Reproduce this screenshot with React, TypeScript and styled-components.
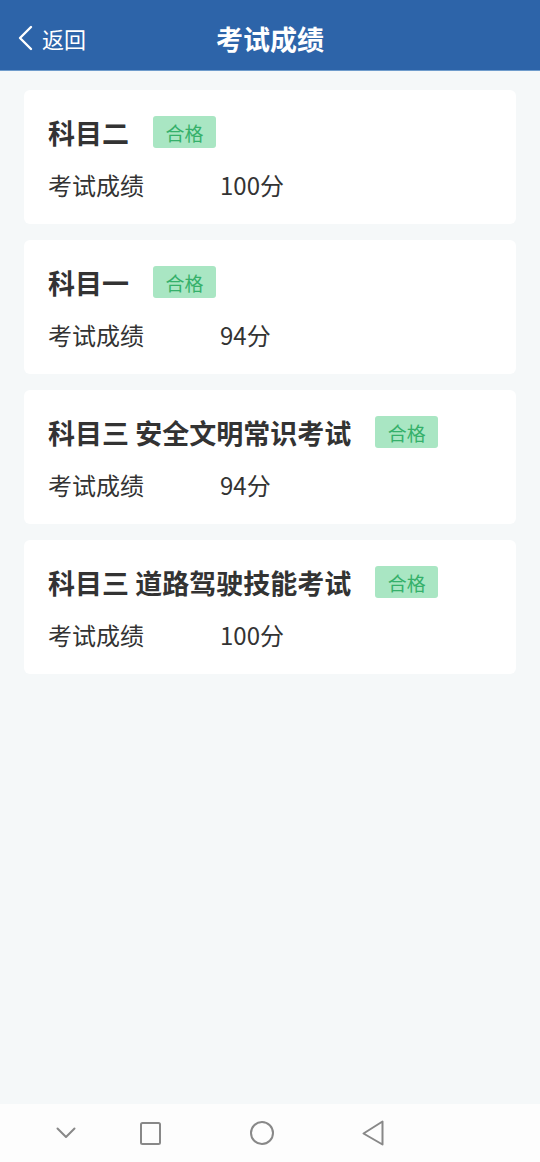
import styled, { createGlobalStyle } from "styled-components";

const GlobalStyle = createGlobalStyle`
  html, body {
    margin: 0;
    padding: 0;
    background: #f5f8f9;
  }
  body {
    font-family: "Noto Sans CJK SC", "Noto Sans", sans-serif;
  }
`;

const Page = styled.div`
  width: 540px;
  height: 1162px;
  display: flex;
  flex-direction: column;
  background: #f5f8f9;
`;

const Header = styled.header`
  height: 71px;
  flex-shrink: 0;
  box-sizing: border-box;
  padding-top: 6px;
  background: #2d64a9;
  border-bottom: 1px solid #6f9ccc;
  display: grid;
  grid-template-columns: 1fr auto 1fr;
  align-items: center;
  color: #fff;
`;

const BackButton = styled.div`
  display: flex;
  align-items: center;
  gap: 8px;
  padding-left: 17px;
  font-size: 22px;
  line-height: 1;
`;

const Title = styled.h1`
  margin: 0;
  font-size: 27px;
  font-weight: 700;
  line-height: 1;
`;

const List = styled.main`
  flex: 1;
  display: flex;
  flex-direction: column;
  gap: 16px;
  padding: 19px 24px 0;
`;

const Card = styled.section`
  height: 134px;
  box-sizing: border-box;
  background: #fff;
  border-radius: 6px;
  padding: 26px 24px 0;
  display: flex;
  flex-direction: column;
  gap: 25px;
`;

const CardHead = styled.div`
  display: flex;
  align-items: center;
  gap: 24px;
  height: 32px;
`;

const Subject = styled.div`
  font-size: 27px;
  font-weight: 700;
  color: #333;
  line-height: 1;
`;

const Badge = styled.span`
  width: 63px;
  height: 32px;
  box-sizing: border-box;
  display: flex;
  align-items: center;
  justify-content: center;
  border-radius: 3px;
  background: #a9e6c3;
  color: #35b06a;
  font-size: 19px;
  line-height: 1;
`;

const ScoreRow = styled.div`
  display: flex;
  align-items: center;
  font-size: 24px;
  color: #333;
  line-height: 1;
`;

const ScoreLabel = styled.span`
  width: 172px;
`;

const NavBar = styled.nav`
  height: 58px;
  flex-shrink: 0;
  background: #fdfdfd;
  display: flex;
  align-items: center;
  padding-left: 56px;
`;

const NavSlot = styled.div<{ $w: number }>`
  width: ${p => p.$w}px;
  display: flex;
  align-items: center;
`;

const results = [
  { name: "科目二", score: "100分" },
  { name: "科目一", score: "94分" },
  { name: "科目三 安全文明常识考试", score: "94分" },
  { name: "科目三 道路驾驶技能考试", score: "100分" },
];

export default function App() {
  return (
    <Page>
      <GlobalStyle />
      <Header>
        <BackButton>
          <svg width="17" height="26" viewBox="0 0 17 26" fill="none">
            <path d="M14 2 L3 13 L14 24" stroke="#fff" strokeWidth="2.4" strokeLinecap="round" strokeLinejoin="round" />
          </svg>
          <span>返回</span>
        </BackButton>
        <Title>考试成绩</Title>
        <div />
      </Header>
      <List>
        {results.map(r => (
          <Card key={r.name}>
            <CardHead>
              <Subject>{r.name}</Subject>
              <Badge>合格</Badge>
            </CardHead>
            <ScoreRow>
              <ScoreLabel>考试成绩</ScoreLabel>
              <span>{r.score}</span>
            </ScoreRow>
          </Card>
        ))}
      </List>
      <NavBar>
        <NavSlot $w={84}>
          <svg width="20" height="12" viewBox="0 0 20 12" fill="none">
            <path d="M1.5 1.5 L10 10 L18.5 1.5" stroke="#888" strokeWidth="2" strokeLinecap="round" strokeLinejoin="round" />
          </svg>
        </NavSlot>
        <NavSlot $w={110}>
          <svg width="21" height="23" viewBox="0 0 21 23" fill="none">
            <rect x="1" y="1" width="19" height="21" rx="1.5" stroke="#888" strokeWidth="2" />
          </svg>
        </NavSlot>
        <NavSlot $w={112}>
          <svg width="24" height="24" viewBox="0 0 24 24" fill="none">
            <circle cx="12" cy="12" r="11" stroke="#888" strokeWidth="2" />
          </svg>
        </NavSlot>
        <NavSlot $w={40}>
          <svg width="22" height="26" viewBox="0 0 22 26" fill="none">
            <path d="M20.5 1.5 L20.5 24.5 L1.5 13.5 Z" stroke="#888" strokeWidth="2" strokeLinejoin="round" />
          </svg>
        </NavSlot>
      </NavBar>
    </Page>
  );
}
